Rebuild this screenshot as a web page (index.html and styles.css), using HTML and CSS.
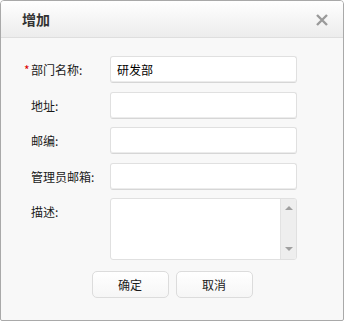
FILE: index.html
```html
<!DOCTYPE html>
<html lang="zh">
<head>
<meta charset="utf-8">
<title>增加</title>
<link rel="stylesheet" href="styles.css">
</head>
<body>
<div class="dialog">
  <div class="dialog-header">
    <span class="dialog-title">增加</span>
    <span class="dialog-close" aria-label="关闭">
      <svg width="12" height="12" viewBox="0 0 12 12"><path d="M1 1 L11 11 M11 1 L1 11" stroke="#9a9a9a" stroke-width="2.4" stroke-linecap="butt"/></svg>
    </span>
  </div>
  <div class="dialog-body">
    <div class="form">
      <label class="form-label"><span class="req">*</span>部门名称:</label>
      <input class="form-input" type="text" value="研发部">
      <label class="form-label">地址:</label>
      <input class="form-input" type="text">
      <label class="form-label">邮编:</label>
      <input class="form-input" type="text">
      <label class="form-label">管理员邮箱:</label>
      <input class="form-input" type="text">
      <label class="form-label">描述:</label>
      <div class="form-textarea">
        <textarea class="textarea"></textarea>
        <div class="scrollbar">
          <span class="arrow-up"></span>
          <span class="arrow-down"></span>
        </div>
      </div>
    </div>
    <div class="actions">
      <button class="btn" type="button">确定</button>
      <button class="btn" type="button">取消</button>
    </div>
  </div>
</div>
</body>
</html>
```
FILE: styles.css
```css
html, body {
  margin: 0;
  padding: 0;
  background: #ffffff;
}
body {
  font-family: "Noto Sans CJK SC", "Noto Sans", "Liberation Sans", sans-serif;
  font-size: 12px;
  color: #1a1a1a;
}
.dialog {
  width: 344px;
  height: 321px;
  box-sizing: border-box;
  border: 1px solid #a9a9a9;
  border-radius: 4px 4px 2px 2px;
  background: #f8f8f8;
  display: flex;
  flex-direction: column;
  overflow: hidden;
}
.dialog-header {
  height: 36px;
  flex: none;
  display: flex;
  align-items: center;
  justify-content: space-between;
  padding: 0 15px 0 21px;
  background: linear-gradient(#ffffff, #ececec);
  border-bottom: 1px solid #dedede;
}
.dialog-title {
  font-size: 14px;
  font-weight: bold;
  color: #333;
  line-height: 16px;
}
.dialog-close {
  display: flex;
  width: 12px;
  height: 12px;
  margin-top: 1px;
}
.dialog-body {
  flex: 1;
  padding: 18px 0 0 0;
  display: flex;
  flex-direction: column;
}
.form {
  display: grid;
  grid-template-columns: 79px 187px;
  row-gap: 8.5px;
  padding-left: 30px;
}
.form-label {
  line-height: 27px;
  height: 27px;
  color: #1a1a1a;
  white-space: nowrap;
}
.req {
  color: #d00;
  display: inline-block;
  width: 7px;
  margin-left: -7px;
}
.form-input {
  box-sizing: border-box;
  height: 27px;
  width: 187px;
  margin: 0;
  border: 1px solid #e0e0e0;
  border-bottom-color: #d6d6d6;
  border-radius: 3px;
  background: #fff;
  padding: 0 6px;
  font-family: inherit;
  font-size: 12px;
  color: #000;
  outline: none;
  box-shadow: inset 0 -1px 0 #ececec;
}
.form-textarea {
  box-sizing: border-box;
  height: 62px;
  width: 187px;
  border: 1px solid #e0e0e0;
  border-radius: 3px;
  background: #fff;
  display: flex;
  overflow: hidden;
}
.textarea {
  flex: 1;
  border: none;
  resize: none;
  outline: none;
  margin: 0;
  padding: 4px 6px;
  font-family: inherit;
  font-size: 12px;
  background: transparent;
}
.scrollbar {
  width: 15px;
  flex: none;
  background: #eeeeee;
  border-left: 1px solid #e2e2e2;
  display: flex;
  flex-direction: column;
  justify-content: space-between;
  align-items: center;
  padding: 7px 0 8px;
}
.arrow-up {
  width: 0;
  height: 0;
  border-left: 4px solid transparent;
  border-right: 4px solid transparent;
  border-bottom: 4px solid #a0a0a0;
}
.arrow-down {
  width: 0;
  height: 0;
  border-left: 4px solid transparent;
  border-right: 4px solid transparent;
  border-top: 4px solid #a0a0a0;
}
.actions {
  display: flex;
  justify-content: center;
  gap: 7px;
  margin-top: 11px;
}
.btn {
  width: 77px;
  height: 27px;
  box-sizing: border-box;
  border: 1px solid #dcdcdc;
  border-radius: 5px;
  background: linear-gradient(#ffffff, #f6f6f6);
  font-family: inherit;
  font-size: 12px;
  color: #1a1a1a;
  padding: 0;
  cursor: pointer;
}
```
